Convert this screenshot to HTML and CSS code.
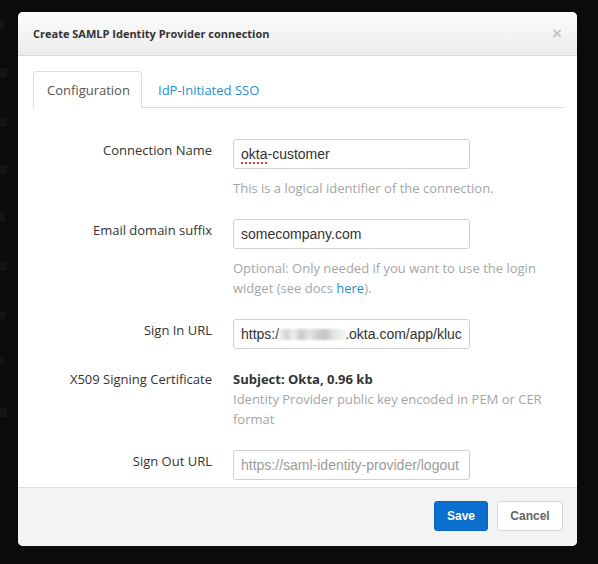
FILE: index.html
```html
<!DOCTYPE html>
<html>
<head>
<meta charset="utf-8">
<link rel="stylesheet" href="styles.css">
</head>
<body>
<div class="backdrop">
  <div class="sidebar">
    <span class="ghost g1"></span>
    <span class="ghost g2"></span>
    <span class="ghost g3"></span>
    <span class="ghost g4"></span>
    <span class="ghost g5"></span>
    <span class="ghost g6"></span>
    <span class="ghost g8"></span>
    <span class="ghost g9"></span>
    <span class="ghost g7"></span>
  </div>
  <div class="modal">
    <div class="modal-header">
      <h4 class="modal-title">Create SAMLP Identity Provider connection</h4>
      <span class="close">×</span>
    </div>
    <div class="modal-body">
      <ul class="tabs">
        <li class="tab active">Configuration</li>
        <li class="tab link">IdP-Initiated SSO</li>
      </ul>
      <form class="form">
        <div class="row">
          <label class="label">Connection Name</label>
          <div class="control">
            <div class="input"><span class="spell">okta</span>-customer</div>
            <p class="help">This is a logical identifier of the connection.</p>
          </div>
        </div>
        <div class="row">
          <label class="label">Email domain suffix</label>
          <div class="control">
            <div class="input">somecompany.com</div>
            <p class="help">Optional: Only needed if you want to use the login widget (see docs <a class="link-inline">here</a>).</p>
          </div>
        </div>
        <div class="row">
          <label class="label">Sign In URL</label>
          <div class="control">
            <div class="input">https:/<span class="blur"></span>.okta.com/app/kluc</div>
          </div>
        </div>
        <div class="row static-row">
          <label class="label">X509 Signing Certificate</label>
          <div class="control">
            <p class="static">Subject: Okta, 0.96 kb</p>
            <p class="help help-tight">Identity Provider public key encoded in PEM or CER format</p>
          </div>
        </div>
        <div class="row">
          <label class="label">Sign Out URL</label>
          <div class="control">
            <div class="input placeholder">https://saml-identity-provider/logout</div>
          </div>
        </div>
      </form>
    </div>
    <div class="modal-footer">
      <button class="btn btn-primary" type="button">Save</button>
      <button class="btn btn-default" type="button">Cancel</button>
    </div>
  </div>
</div>
</body>
</html>
```
FILE: styles.css
```css
* { box-sizing: border-box; }
html, body { margin: 0; padding: 0; }
body {
  background: #0b0b0b;
  width: 598px;
  height: 564px;
  overflow: hidden;
  font-family: "Open Sans", "Liberation Sans", sans-serif;
}
.backdrop {
  position: relative;
  width: 598px;
  height: 564px;
  padding: 12px 0 0 18px;
}
.sidebar {
  position: absolute;
  left: 0;
  top: 0;
  width: 12px;
  height: 564px;
}
.ghost {
  position: absolute;
  left: 0;
  width: 7px;
  height: 9px;
  background: #141414;
}
.g1 { top: 20px; width: 4px; }
.g2 { top: 68px; }
.g3 { top: 118px; }
.g4 { top: 165px; }
.g5 { top: 213px; width: 5px; }
.g6 { top: 262px; }
.g8 { top: 312px; width: 6px; height: 7px; }
.g9 { top: 357px; width: 4px; height: 7px; }
.g7 { top: 408px; }

.modal {
  position: relative;
  width: 559px;
  height: 534px;
  background: #fff;
  border-radius: 5px;
  overflow: hidden;
  display: flex;
  flex-direction: column;
}
.modal-header {
  height: 44px;
  flex: none;
  background: linear-gradient(#fcfcfc, #ececec);
  border-bottom: 1px solid #d9d9d9;
  display: flex;
  align-items: center;
  justify-content: space-between;
  padding: 0 15px 0 15px;
}
.modal-title {
  margin: 0;
  font-size: 11px;
  font-weight: 700;
  color: #333;
}
.close {
  font-family: "Liberation Sans", sans-serif;
  font-size: 17px;
  font-weight: 700;
  color: #c4c4c4;
  line-height: 1;
  margin-top: -1px;
}
.modal-body {
  flex: 1;
  overflow: hidden;
  padding: 15px 14px 0 15px;
}
.tabs {
  list-style: none;
  margin: 0;
  padding: 0;
  display: flex;
  border-bottom: 1px solid #dddddd;
  height: 37px;
}
.tab {
  height: 37px;
  padding: 0 13px;
  font-size: 13px;
  line-height: 36px;
  margin-right: 2px;
  border: 1px solid transparent;
  border-radius: 4px 4px 0 0;
}
.tab.active {
  color: #555;
  background: #fff;
  border-color: #dddddd #dddddd transparent;
  width: 109px;
}
.tab.link {
  color: #1f8fd0;
}
.form {
  padding-top: 31px;
}
.row {
  display: flex;
  margin-bottom: 21px;
}
.static-row { margin-top: -1px; }
.label {
  width: 179px;
  flex: none;
  text-align: right;
  font-size: 13px;
  color: #333;
  line-height: 20px;
  padding-top: 1px;
}
.static-row .label { padding-top: 0; }
.control {
  margin-left: 21px;
  width: 320px;
}
.input {
  width: 237px;
  height: 30px;
  border: 1px solid #cfcfcf;
  border-radius: 3px;
  padding: 0 7px;
  font-family: "Liberation Sans", Arial, sans-serif;
  font-size: 14px;
  line-height: 28px;
  color: #333;
  white-space: nowrap;
  overflow: hidden;
}
.input.placeholder { color: #9a9a9a; }
.spell {
  text-decoration: underline dotted #e23c3c;
  text-decoration-thickness: 2px;
  text-underline-offset: 3px;
}
.blur {
  display: inline-block;
  width: 66px;
  height: 11px;
  vertical-align: -1px;
  background: linear-gradient(90deg, #f2f2f2 0%, #d4d4d4 12%, #eeeeee 22%, #c9c9c9 34%, #e6e6e6 46%, #cfcfcf 58%, #c4c4c4 70%, #e2e2e2 82%, #f4f4f4 100%);
  filter: blur(1.2px);
}
.help {
  margin: 9px 0 0;
  font-size: 13px;
  line-height: 20px;
  color: #a5a5a5;
}
.help-tight { margin-top: 0; }
.link-inline { color: #1f8fd0; }
.static {
  margin: 0;
  font-size: 13px;
  font-weight: 700;
  line-height: 20px;
  color: #333;
}
.modal-footer {
  flex: none;
  height: 59px;
  background: #f4f4f4;
  border-top: 1px solid #dedede;
  display: flex;
  justify-content: flex-end;
  align-items: flex-start;
  padding: 13px 14px 0 0;
  gap: 9px;
}
.btn {
  height: 30px;
  border-radius: 3px;
  font-family: "Liberation Sans", Arial, sans-serif;
  font-size: 12px;
  font-weight: 700;
  padding: 0;
  margin: 0;
  cursor: pointer;
}
.btn-primary {
  width: 54px;
  background: #0a6fcf;
  color: #fff;
  border: 1px solid #0866c0;
}
.btn-default {
  width: 66px;
  background: #fff;
  color: #666;
  border: 1px solid #d6d6d6;
}
```
